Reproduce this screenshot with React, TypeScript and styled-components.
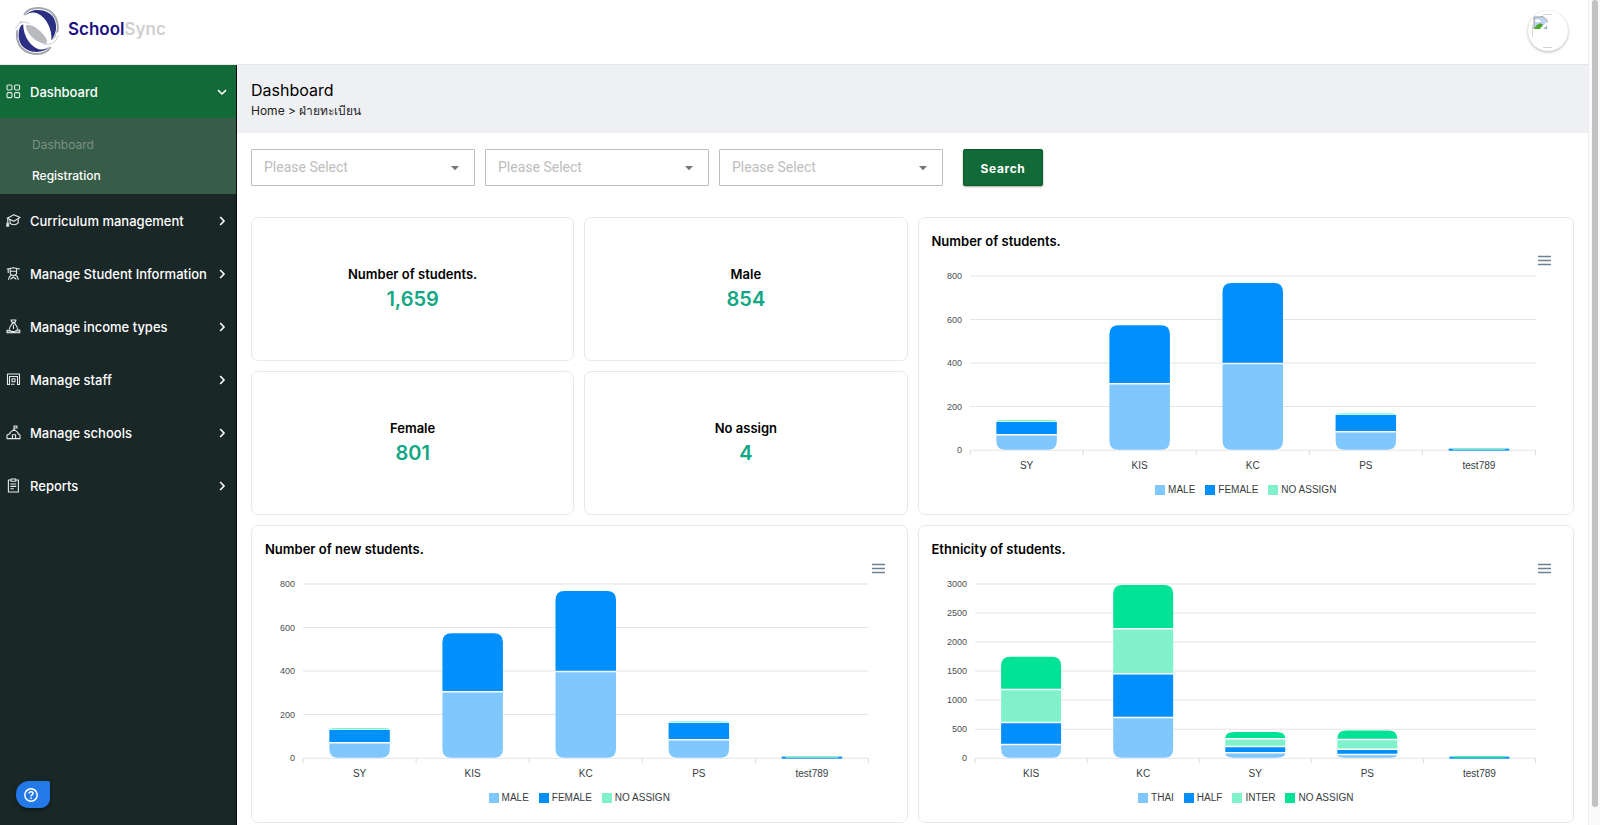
import React from 'react';
import styled, { createGlobalStyle } from 'styled-components';

const GlobalStyle = createGlobalStyle`
  *, *::before, *::after { box-sizing: border-box; }
  body { margin: 0; background: #fff; color: #000; font-family: Inter, "Liberation Sans", sans-serif; }
  button, select { font: inherit; color: inherit; }
  h1, h2, p, ul, dl, dd, dt { margin: 0; padding: 0; }
  ul { list-style: none; }
`;

/* ---------- shell ---------- */

const Shell = styled.div`
  display: grid;
  grid-template-columns: minmax(0, 1fr) 12px;
  min-height: 100vh;
`;

const Page = styled.div`
  display: flex;
  flex-direction: column;
`;

const ScrollTrack = styled.div`
  position: sticky;
  top: 0;
  height: 100vh;
  padding: 0 3px 18px;
  background: #fafafa;
  border-left: 1px solid #eee;
`;

const ScrollThumb = styled.div`
  width: 6px;
  height: 100%;
  border-radius: 3px;
  background: #c2c2c2;
`;

const TopBar = styled.header`
  display: flex;
  align-items: center;
  justify-content: space-between;
  height: 65px;
  padding: 0 20px 3px 15px;
  border-bottom: 1px solid #e4e6e8;
`;

const Brand = styled.a`
  display: flex;
  align-items: center;
  gap: 9px;
  color: #1a1082;
  font: 600 17px/24px Inter, sans-serif;
  text-decoration: none;
`;

const BrandName = styled.span`
  padding-bottom: 3px;
`;

const BrandLight = styled.span`
  color: #cfcfd1;
`;

const Avatar = styled.button`
  display: grid;
  place-items: center;
  width: 40px;
  height: 40px;
  padding: 0;
  border: 0;
  border-radius: 50%;
  background: #fff;
  box-shadow: 0 1px 3px rgba(0, 0, 0, 0.3);
`;

const Body = styled.div`
  display: flex;
  flex: 1;
`;

/* ---------- sidebar ---------- */

const Sidebar = styled.nav`
  flex: 0 0 237px;
  min-width: 0;
  border-right: 1px solid #050a09;
  background: #1a2727;
  color: #fff;
`;

const MenuButton = styled.button<{ $active?: boolean }>`
  display: flex;
  align-items: center;
  gap: 9px;
  width: 100%;
  height: 53px;
  padding: 0 8px 0 6px;
  border: 0;
  background: ${(p) => (p.$active ? '#136a39' : 'transparent')};
  font-size: 13px;
  font-weight: 500;
  line-height: 20px;
  text-align: left;

  svg { flex: none; }
`;

const MenuLabel = styled.span`
  flex: 1;
  min-width: 0;
  white-space: nowrap;
`;

const SubMenu = styled.ul`
  padding: 11px 0 3px 32px;
  background: #375c48;
`;

const SubLink = styled.a<{ $muted?: boolean }>`
  display: block;
  color: ${(p) => (p.$muted ? '#7b9186' : '#fff')};
  font-size: 12px;
  font-weight: ${(p) => (p.$muted ? 400 : 500)};
  line-height: 31px;
  text-decoration: none;
`;

const HelpButton = styled.button`
  position: fixed;
  left: 16px;
  bottom: 17px;
  display: flex;
  align-items: center;
  width: 34px;
  height: 27px;
  padding: 0 0 0 8px;
  border: 0;
  border-radius: 13px 2px 9px 13px;
  background: #2479e8;
  box-shadow: 0 2px 4px rgba(0, 0, 0, 0.4);
`;

/* ---------- main ---------- */

const Main = styled.main`
  flex: 1;
  min-width: 0;
`;

const PageHead = styled.div`
  padding: 14px 14px 13px;
  background: #eff0f4;
`;

const PageTitle = styled.h1`
  font-size: 16px;
  font-weight: 400;
  line-height: 22px;
`;

const Crumbs = styled.p`
  color: #222;
  font-size: 12px;
  line-height: 19px;
`;

const Filters = styled.form`
  display: flex;
  gap: 10px;
  padding: 16px 14px 31px;
`;

const SelectBox = styled.label`
  position: relative;
  display: block;
  width: 224px;
`;

const Select = styled.select`
  display: block;
  width: 100%;
  height: 37px;
  padding: 0 32px 2px 12px;
  border: 1px solid #bdbdbd;
  border-radius: 1px;
  background: #fff;
  color: #bdbdbd;
  font: 400 14px/20px Roboto, sans-serif;
  appearance: none;
`;

const Caret = styled.svg`
  position: absolute;
  top: 17px;
  right: 16px;
  pointer-events: none;
`;

const SearchButton = styled.button`
  width: 80px;
  height: 37px;
  margin-left: 10px;
  padding: 2px 0 0;
  border: 1px solid #0c5c28;
  border-radius: 2px;
  background: #136a39;
  box-shadow: 0 1px 2px rgba(0, 0, 0, 0.35);
  color: #fff;
  font-size: 12px;
  font-weight: 700;
  letter-spacing: 0.05em;
`;

const Board = styled.div`
  display: grid;
  grid-template-columns: repeat(4, minmax(0, 1fr));
  gap: 10px;
  padding: 0 14px 2px;
`;

const Card = styled.section`
  border: 1px solid #e8e9eb;
  border-radius: 7px;
  background: #fff;
`;

const StatCard = styled(Card)`
  display: flex;
  flex-direction: column;
  align-items: center;
  justify-content: center;
  min-height: 144px;
`;

const StatLabel = styled.h2`
  font-size: 13px;
  font-weight: 600;
  line-height: 20px;
`;

const StatValue = styled.p`
  color: #12a783;
  font-size: 20px;
  font-weight: 600;
  line-height: 30px;
`;

const ChartCard = styled(Card)<{ $column: string; $row: string }>`
  position: relative;
  grid-column: ${(p) => p.$column};
  grid-row: ${(p) => p.$row};
  min-height: 298px;
  padding: 13px 0 17px;
`;

const ChartTitle = styled.h2`
  padding: 0 13px;
  font-size: 13px;
  font-weight: 600;
  line-height: 20px;
`;

const ChartMenu = styled.button`
  position: absolute;
  top: 34px;
  right: 20px;
  width: 17px;
  height: 17px;
  padding: 0;
  border: 0;
  background: none;
`;

const Plot = styled.svg`
  display: block;
  width: 100%;
  height: auto;
  font-family: "Liberation Sans", Arial, sans-serif;
`;

const Legend = styled.ul`
  display: flex;
  justify-content: center;
  gap: 10px;
  color: #373d3f;
  font: 10px/14px "Liberation Sans", Arial, sans-serif;
`;

const LegendItem = styled.li`
  display: flex;
  align-items: center;
  gap: 3px;
`;

const Swatch = styled.span<{ $color: string }>`
  width: 10px;
  height: 10px;
  background: ${(p) => p.$color};
`;

/* ---------- icons ---------- */

const MenuIcon = ({ children }: { children: React.ReactNode }) => (
  <svg width="15" height="15" viewBox="0 0 15 15" fill="none" stroke="#e6ebea" strokeWidth="1.1" strokeLinejoin="round" strokeLinecap="round" aria-hidden="true">
    {children}
  </svg>
);

const GridIcon = () => (
  <MenuIcon>
    <rect x="1" y="1" width="5" height="5" rx="1.2" />
    <rect x="8.6" y="1" width="5" height="5" rx="1.2" />
    <rect x="1" y="8.6" width="5" height="5" rx="1.2" />
    <rect x="8.6" y="8.6" width="5" height="5" rx="1.2" />
  </MenuIcon>
);

const CapIcon = () => (
  <MenuIcon>
    <path d="M1.2 5.2 7.8 1.8l6.4 2.6-6.3 3.8z" />
    <path d="M4 6.6v3.6c2 2.2 6 2 8.200-.4V5.800M1.800 5.600v4.200" />
    <path d="M.6 10.2h2.2v3.200H.6z" fill="#e6ebea" strokeWidth=".6" />
  </MenuIcon>
);

const StudentIcon = () => (
  <MenuIcon>
    <path d="M1.2 3 7.400 1.800l6.200 1.200" />
    <path d="M4.200 3v3.400c0 4 6.400 4 6.400 0V3M4.200 5.200h6.400M2.200 3.400v3M5 9.600C3.600 10.200 2.800 11.400 2.600 13.400M9.800 9.600c1.400.6 2.200 1.800 2.400 3.800M4.800 13l2.600-2 2.600 2" />
  </MenuIcon>
);

const MoneyIcon = () => (
  <MenuIcon>
    <path d="M5 1h5L9 3.400H6zM5.800 4.800h3.600M6 4.800C4.600 6.400 3.600 8 3.400 10M9 4.800c1.400 1.600 2.400 3.200 2.600 5.200M7.500 6.600v3" />
    <path d="M1 11.200h3l1.600 1.400h3l2.600-1.600h2.600v2.800H1z" fill="#e6ebea" fillOpacity=".5" />
  </MenuIcon>
);

const StaffIcon = () => (
  <MenuIcon>
    <path d="M1.500 12.500V2h12v10.500h-2M1.500 12.500h2V4.500h8v8" />
    <path d="M6 6.800h3v3H6zM5.500 12.300h2.500" />
  </MenuIcon>
);

const SchoolIcon = () => (
  <MenuIcon>
    <path d="M8 4.400V1h3v2H8M4 7.600 8 4.400l4 3.200M4 7.600v1.200L1 10v3.600h13V10l-2-1.200V7.600" />
    <path d="M6.400 13.400V9.800h3.200v3.600" />
  </MenuIcon>
);

const ReportIcon = () => (
  <MenuIcon>
    <path d="M4.600 2H2.400v12h10V2h-2.200" />
    <path d="M5 1h4.800v2.200H5zM4.800 6h5M4.800 8.400h5M4.800 10.800h2.600" />
  </MenuIcon>
);

const Chevron = ({ down }: { down?: boolean }) => (
  <svg width="12" height="12" viewBox="0 0 12 12" fill="none" stroke="#fff" strokeWidth="1.6" aria-hidden="true">
    <path d={down ? 'M2 4.2 6 8l4-3.8' : 'M4.2 2 8 6l-3.8 4'} />
  </svg>
);

const LogoCrescent = () => (
  <>
    <path d="M72 44C90 14 148 16 167 52c12 27 6 50-8 68" fill="none" stroke="#a5a6ad" strokeWidth="6" />
    <path d="M76 46C92 22 146 22 163 56c10 24 5 46-9 64 3-30-12-68-44-82-12-4-25-1-34 8z" fill="#2c2e83" />
  </>
);

const Logo = () => (
  <svg width="44" height="48" viewBox="45 20 132 144" aria-hidden="true">
    <LogoCrescent />
    <g transform="rotate(180 112 92)">
      <LogoCrescent />
    </g>
    <path d="M78 75c20-9 64 30 65 54-17 9-65-22-65-54z" fill="#b9babd" />
    <path d="M50 90c3-18 18-26 34-20M174 96c-3 22-18 34-34 30" fill="none" stroke="#fff" strokeWidth="8" />
    <path d="M47 86c5-18 24-27 42-16M175 106c-5 18-24 30-44 25" fill="none" stroke="#c9cacf" strokeWidth="3" />
  </svg>
);

const BrokenImage = () => (
  <svg width="32" height="34" viewBox="0 0 32 34" aria-hidden="true">
    <path d="M11 .5h9M11 33.5h9M.5 11v12" stroke="#d4d4d4" fill="none" />
    <path d="M2 3h9l4 4v8H2z" fill="#c3d5f5" />
    <path d="M2 15V3h7l1-1 5 4v3" fill="none" stroke="#9a9a9a" />
    <path d="M3 7c1-2 3-2 4-1 2 0 2 2 1 2H3z" fill="#fff" />
    <path d="M2 15c2-5 7-7 9-4l-3 4z" fill="#4ea72e" />
    <path d="M15 7.5 8 15h3l4-4z" fill="#fff" />
    <path d="M12 15h3v-3z" fill="#8fa9a0" />
  </svg>
);

/* ---------- chart ---------- */

const SKY = '#80c7fd';
const BLUE = '#008ffb';
const MINT = '#80f1cb';
const GREEN = '#00e396';

interface Series { name: string; color: string }
interface Column { label: string; values: number[] }
interface ChartProps {
  title: string;
  column: string;
  row: string;
  series: Series[];
  columns: Column[];
  max: number;
  step: number;
  left: number;
}

const WIDTH = 654;
const RIGHT = 616;
const TOP = 25;
const BASE = 199;
const RADIUS = 9;

const segmentPath = (x: number, w: number, top: number, bottom: number, first: boolean, last: boolean) => {
  const ry = Math.min(RADIUS, bottom - top);
  const head = last
    ? `M${x} ${top + ry}q0 ${-ry} ${RADIUS} ${-ry}H${x + w - RADIUS}q${RADIUS} 0 ${RADIUS} ${ry}`
    : `M${x} ${top}H${x + w}`;
  const foot = first
    ? `V${bottom - ry}q0 ${ry} ${-RADIUS} ${ry}H${x + RADIUS}q${-RADIUS} 0 ${-RADIUS} ${-ry}Z`
    : `V${bottom}H${x}Z`;
  return head + foot;
};

const StackedChart = ({ title, column, row, series, columns, max, step, left }: ChartProps) => {
  const y = (v: number) => BASE - (v / max) * (BASE - TOP);
  const slot = (RIGHT - left) / columns.length;
  const barWidth = slot * 0.535;
  const ticks = Array.from({ length: max / step + 1 }, (_, i) => i * step);

  return (
    <ChartCard $column={column} $row={row}>
      <ChartTitle>{title}</ChartTitle>
      <ChartMenu type="button" aria-label={`${title} menu`}>
        <svg width="17" height="17" viewBox="0 0 17 17" stroke="#6e8192" strokeWidth="1.4" aria-hidden="true">
          <path d="M2 4.5h13M2 8.500h13M2 12.500h13" />
        </svg>
      </ChartMenu>
      <Plot viewBox={`0 0 ${WIDTH} 232`} role="img" aria-label={title}>
        {ticks.map((t) => (
          <g key={t}>
            <line x1={left} x2={RIGHT} y1={y(t)} y2={y(t)} stroke="#e4e4e4" />
            <text x={left - 8} y={y(t) + 3} fontSize="9" fill="#4b5053" textAnchor="end">{t}</text>
          </g>
        ))}
        {Array.from({ length: columns.length + 1 }, (_, i) => (
          <line key={i} x1={left + slot * i} x2={left + slot * i} y1={BASE} y2={BASE + 5} stroke="#dcdcdc" />
        ))}
        {columns.map((c, i) => {
          const x = left + slot * i + (slot - barWidth) / 2;
          const shown = c.values.map((v, s) => ({ v, s })).filter((d) => d.v > 0);
          const total = c.values.reduce((a, b) => a + b, 0);
          const flat = BASE - y(total) < 3;
          let sum = 0;
          return (
            <g key={c.label}>
              {flat && (
                <>
                  <rect x={x} y={BASE - 1.5} width={barWidth} height="2" fill={series[shown[0].s].color} />
                  <rect x={x + 4} y={BASE - 1.5} width={barWidth - 8} height="1.2" fill={series[shown[shown.length - 1].s].color} />
                </>
              )}
              {!flat && shown.map(({ v, s }, k) => {
                const last = k === shown.length - 1;
                const thin = y(sum) - y(sum + v) < 2;
                const bottom = y(sum) - (k === 0 ? 0.5 : thin ? 0 : 1);
                sum += v;
                const top = y(sum) + (last ? 0 : 0.5);
                return (
                  <path
                    key={s}
                    d={segmentPath(x, barWidth, top, bottom, k === 0, last)}
                    fill={series[s].color}
                  />
                );
              })}
              <text x={x + barWidth / 2} y={BASE + 19} fontSize="10" fill="#373d3f" textAnchor="middle">{c.label}</text>
            </g>
          );
        })}
      </Plot>
      <Legend>
        {series.map((s) => (
          <LegendItem key={s.name}>
            <Swatch $color={s.color} />
            {s.name}
          </LegendItem>
        ))}
      </Legend>
    </ChartCard>
  );
};

/* ---------- data ---------- */

const genderSeries: Series[] = [
  { name: 'MALE', color: SKY },
  { name: 'FEMALE', color: BLUE },
  { name: 'NO ASSIGN', color: MINT },
];

const genderColumns: Column[] = [
  { label: 'SY', values: [70, 62, 6] },
  { label: 'KIS', values: [304, 270, 0] },
  { label: 'KC', values: [397, 371, 0] },
  { label: 'PS', values: [83, 81, 6] },
  { label: 'test789', values: [0, 5, 4] },
];

const ethnicitySeries: Series[] = [
  { name: 'THAI', color: SKY },
  { name: 'HALF', color: BLUE },
  { name: 'INTER', color: MINT },
  { name: 'NO ASSIGN', color: GREEN },
];

const ethnicityColumns: Column[] = [
  { label: 'KIS', values: [230, 380, 570, 565] },
  { label: 'KC', values: [697, 754, 772, 760] },
  { label: 'SY', values: [88, 108, 132, 121] },
  { label: 'PS', values: [58, 92, 167, 161] },
  { label: 'test789', values: [0, 12, 0, 20] },
];

const stats = [
  { label: 'Number of students.', value: '1,659' },
  { label: 'Male', value: '854' },
  { label: 'Female', value: '801' },
  { label: 'No assign', value: '4' },
];

const menu = [
  { label: 'Curriculum management', icon: <CapIcon /> },
  { label: 'Manage Student Information', icon: <StudentIcon /> },
  { label: 'Manage income types', icon: <MoneyIcon /> },
  { label: 'Manage staff', icon: <StaffIcon /> },
  { label: 'Manage schools', icon: <SchoolIcon /> },
  { label: 'Reports', icon: <ReportIcon /> },
];

export default function App() {
  return (
    <>
      <GlobalStyle />
      <Shell>
        <Page>
          <TopBar>
            <Brand href="#">
              <Logo />
              <BrandName>School<BrandLight>Sync</BrandLight></BrandName>
            </Brand>
            <Avatar type="button" aria-label="Account">
              <BrokenImage />
            </Avatar>
          </TopBar>
          <Body>
            <Sidebar>
              <MenuButton type="button" $active aria-expanded="true">
                <GridIcon />
                <MenuLabel>Dashboard</MenuLabel>
                <Chevron down />
              </MenuButton>
              <SubMenu>
                <li><SubLink href="#" $muted>Dashboard</SubLink></li>
                <li><SubLink href="#">Registration</SubLink></li>
              </SubMenu>
              {menu.map((m) => (
                <MenuButton key={m.label} type="button" aria-expanded="false">
                  {m.icon}
                  <MenuLabel>{m.label}</MenuLabel>
                  <Chevron />
                </MenuButton>
              ))}
            </Sidebar>
            <Main>
              <PageHead>
                <PageTitle>Dashboard</PageTitle>
                <Crumbs>Home &gt; ฝ่ายทะเบียน</Crumbs>
              </PageHead>
              <Filters onSubmit={(e) => e.preventDefault()}>
                {['First filter', 'Second filter', 'Third filter'].map((name) => (
                  <SelectBox key={name}>
                    <Select aria-label={name} defaultValue="">
                      <option value="">Please Select</option>
                    </Select>
                    <Caret width="8" height="5" viewBox="0 0 8 5" aria-hidden="true">
                      <path d="M0 0h8L4 4.2z" fill="#757575" />
                    </Caret>
                  </SelectBox>
                ))}
                <SearchButton type="submit">Search</SearchButton>
              </Filters>
              <Board>
                {stats.map((s, i) => (
                  <StatCard key={s.label} style={{ gridColumn: (i % 2) + 1, gridRow: Math.floor(i / 2) + 1 }}>
                    <StatLabel>{s.label}</StatLabel>
                    <StatValue>{s.value}</StatValue>
                  </StatCard>
                ))}
                <StackedChart title="Number of students." column="3 / 5" row="1 / 3" series={genderSeries} columns={genderColumns} max={800} step={200} left={51} />
                <StackedChart title="Number of new students." column="1 / 3" row="3" series={genderSeries} columns={genderColumns} max={800} step={200} left={51} />
                <StackedChart title="Ethnicity of students." column="3 / 5" row="3" series={ethnicitySeries} columns={ethnicityColumns} max={3000} step={500} left={56} />
              </Board>
            </Main>
          </Body>
        </Page>
        <ScrollTrack aria-hidden="true">
          <ScrollThumb />
        </ScrollTrack>
      </Shell>
      <HelpButton type="button" aria-label="Help">
        <svg width="14" height="14" viewBox="0 0 14 14" fill="none" stroke="#fff" strokeWidth="1.5" aria-hidden="true">
          <circle cx="7" cy="7" r="6.2" />
          <path d="M5 5.6c0-2.6 4-2.4 4-.2C9 7 7 6.800 7 8.400M7 9.600v1.400" />
        </svg>
      </HelpButton>
    </>
  );
}
